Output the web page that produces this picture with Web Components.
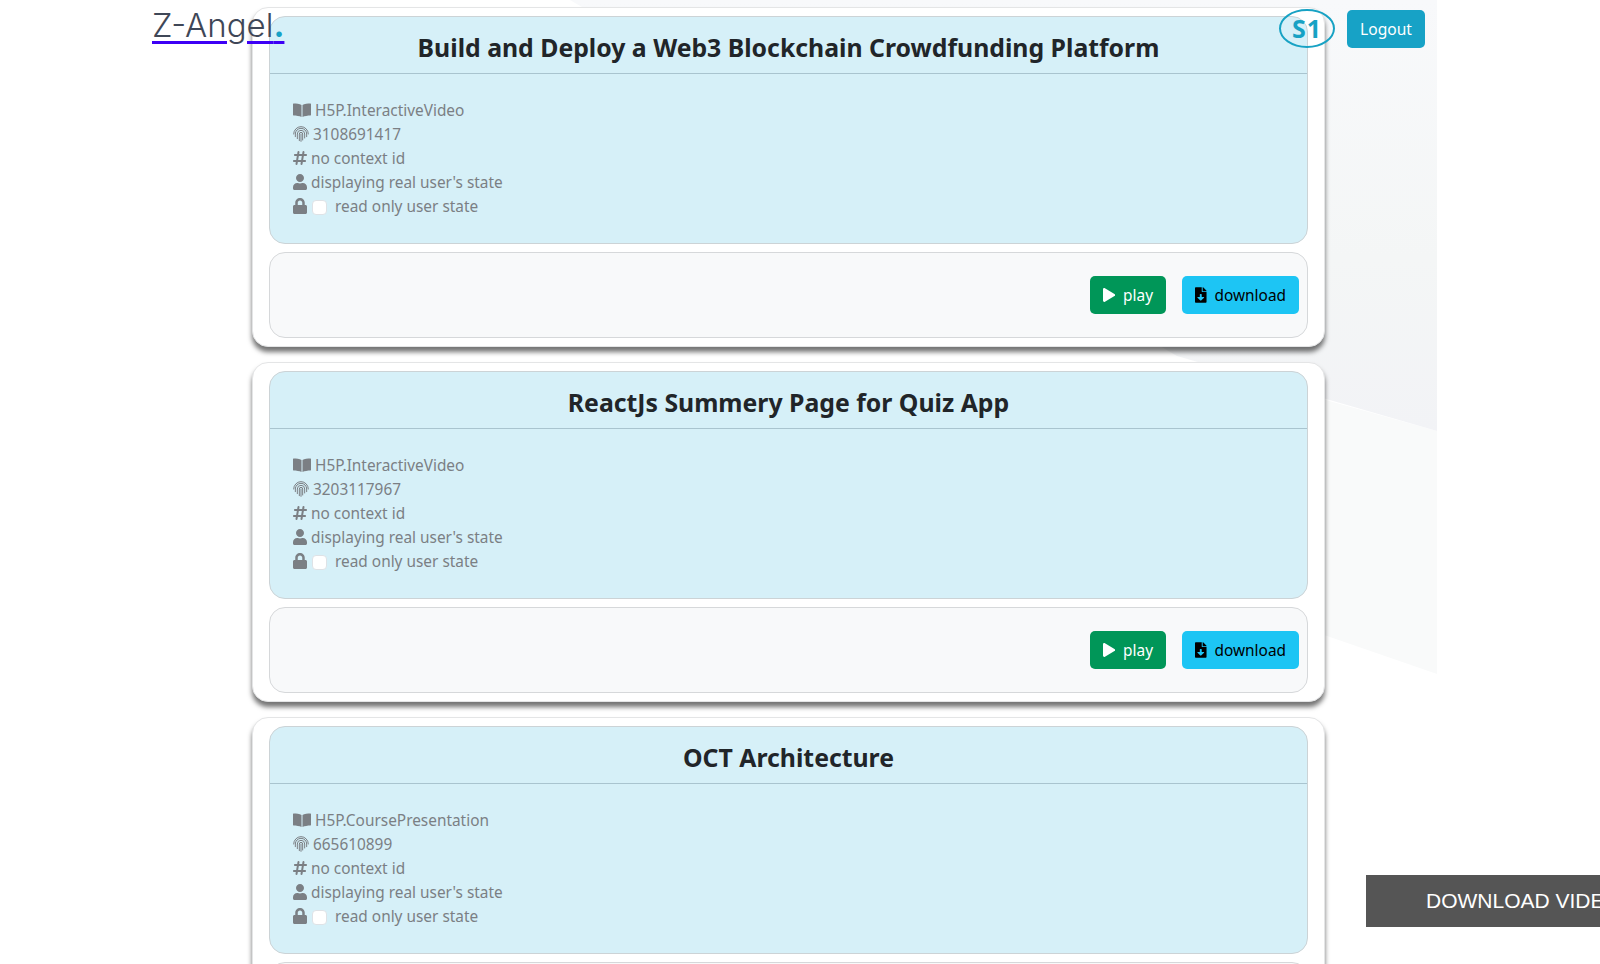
<!DOCTYPE html>
<html lang="en">
<head>
<meta charset="utf-8">
<title>Z-Angel</title>
<style>
  html, body { margin: 0; padding: 0; height: 100%; overflow: hidden; background: #fff; }
  body { font-family: "Noto Sans", "Open Sans", sans-serif; }
</style>
</head>
<body>
<z-app>
  <z-backdrop slot="backdrop"></z-backdrop>
  <z-navbar slot="nav"></z-navbar>
  <z-content-card heading="Build and Deploy a Web3 Blockchain Crowdfunding Platform" library="H5P.InteractiveVideo" content-id="3108691417"></z-content-card>
  <z-content-card heading="ReactJs Summery Page for Quiz App" library="H5P.InteractiveVideo" content-id="3203117967"></z-content-card>
  <z-content-card heading="OCT Architecture" library="H5P.CoursePresentation" content-id="665610899" no-buttons></z-content-card>
  <z-download-tab slot="overlay"></z-download-tab>
</z-app>

<script>
const ICONS = {
  book: ['0 0 576 512', 'M16 48C100 48 220 60 272 96V480C210 450 100 432 16 432 6 432 0 426 0 416V64C0 54 6 48 16 48zM560 48C476 48 356 60 304 96V480C366 450 476 432 560 432 570 432 576 426 576 416V64C576 54 570 48 560 48z'],
  hash: ['0 0 448 512', 'M181.3 32.4c17.4 2.9 29.2 19.4 26.3 36.8L197.8 128h95.1l11.5-69.3c2.9-17.4 19.4-29.2 36.8-26.3s29.2 19.4 26.3 36.8L357.8 128H416c17.7 0 32 14.3 32 32s-14.3 32-32 32H347.1L325.8 320H384c17.7 0 32 14.3 32 32s-14.3 32-32 32H315.1l-11.5 69.3c-2.9 17.4-19.4 29.2-36.8 26.3s-29.2-19.4-26.3-36.8l9.8-58.7H155.1l-11.5 69.3c-2.9 17.4-19.4 29.2-36.8 26.3s-29.2-19.4-26.3-36.8L90.2 384H32c-17.7 0-32-14.3-32-32s14.3-32 32-32H100.9l21.3-128H64c-17.7 0-32-14.3-32-32s14.3-32 32-32h68.9l11.5-69.3c2.9-17.4 19.4-29.2 36.8-26.3zM187.1 192L165.8 320h95.1l21.3-128H187.1z'],
  user: ['0 0 448 512', 'M224 256c70.7 0 128-57.3 128-128S294.7 0 224 0 96 57.3 96 128s57.3 128 128 128zm89.6 32h-16.7c-22.2 10.2-46.9 16-72.9 16s-50.6-5.8-72.9-16h-16.7C60.2 288 0 348.2 0 422.4V464c0 26.5 21.5 48 48 48h352c26.5 0 48-21.5 48-48v-41.6c0-74.2-60.2-134.4-134.4-134.4z'],
  lock: ['0 0 448 512', 'M400 224h-24v-72C376 68.2 307.8 0 224 0S72 68.2 72 152v72H48c-26.5 0-48 21.5-48 48v192c0 26.5 21.5 48 48 48h352c26.5 0 48-21.5 48-48V272c0-26.5-21.5-48-48-48zm-104 0H152v-72c0-39.7 32.3-72 72-72s72 32.3 72 72v72z'],
  play: ['0 0 448 512', 'M424.4 214.7L72.4 6.6C43.8-10.3 0 6.1 0 47.9V464c0 37.5 40.7 60.1 72.4 41.3l352-208c31.4-18.5 31.5-64.1 0-82.6z'],
  file: ['0 0 384 512', 'M224 136V0H24C10.7 0 0 10.7 0 24v464c0 13.3 10.7 24 24 24h336c13.3 0 24-10.7 24-24V160H248c-13.2 0-24-10.8-24-24zm76.45 211.36l-96.42 95.7c-6.65 6.61-17.39 6.61-24.04 0l-96.42-95.7C73.42 337.29 80.54 320 94.82 320H160v-80c0-8.84 7.16-16 16-16h32c8.84 0 16 7.16 16 16v80h65.18c14.28 0 21.4 17.29 11.27 27.36zM377 105L279.1 7c-4.5-4.5-10.6-7-17-7H256v128h128v-6.1c0-6.3-2.5-12.4-7-16.9z']
};

function icon(name) {
  const [box, d] = ICONS[name];
  const w = box.split(' ')[2] / 512;
  return `<svg viewBox="${box}" width="${w * 16}" height="16" fill="currentColor" aria-hidden="true"><path d="${d}"/></svg>`;
}

const FINGERPRINT = `<svg viewBox="0 0 24 24" width="16" height="16" fill="none" stroke="currentColor" stroke-width="1.5" stroke-linecap="round" aria-hidden="true">
  <path d="M1 12a11 11 0 0 1 22 0"/>
  <path d="M3.5 16v-4a8.5 8.5 0 0 1 17 0v4"/>
  <path d="M6.5 19v-7a5.5 5.5 0 0 1 11 0v6"/>
  <path d="M9.5 22v-10a2.5 2.5 0 0 1 5 0v9"/>
  <path d="M12 12v11"/>
</svg>`;

class ZApp extends HTMLElement {
  constructor() {
    super();
    this.attachShadow({ mode: 'open' });
    this.shadowRoot.innerHTML = `
      <style>
        :host { display: block; position: relative; height: 964px; overflow: hidden; }
        main { position: relative; display: flex; flex-direction: column; gap: 14.5px; width: 1073px; margin-left: 252px; padding-top: 6.5px; }
      </style>
      <slot name="backdrop"></slot>
      <main><slot></slot></main>
      <slot name="nav"></slot>
      <slot name="overlay"></slot>
    `;
  }
}

class ZBackdrop extends HTMLElement {
  constructor() {
    super();
    this.attachShadow({ mode: 'open' });
    this.shadowRoot.innerHTML = `
      <style>
        :host { display: block; position: absolute; inset: 0; }
        svg { display: block; }
      </style>
      <svg width="1600" height="964" viewBox="0 0 1600 964" aria-hidden="true">
        <defs>
          <linearGradient id="top" x1="0" y1="0" x2="0" y2="1">
            <stop offset="0" stop-color="#f8f9fb"/>
            <stop offset=".6" stop-color="#f4f6f6"/>
            <stop offset="1" stop-color="#f2f3f6"/>
          </linearGradient>
        </defs>
        <polygon points="1200,365 1437,431 1437,674 1240,606" fill="#f9fafa"/>
        <polygon points="570,0 1437,0 1437,431 1177,356" fill="url(#top)"/>
      </svg>
    `;
  }
}

class ZNavbar extends HTMLElement {
  constructor() {
    super();
    this.attachShadow({ mode: 'open' });
    this.shadowRoot.innerHTML = `
      <style>
        :host { display: flex; position: absolute; top: 0; left: 0; width: 1425px; height: 58px; padding-left: 152px; box-sizing: border-box; align-items: flex-start; justify-content: space-between; }
        .logo { font: 300 33px/1 "Inter", "Lato", sans-serif; color: #3f4757; text-decoration: underline; text-decoration-color: #3d00f5; text-decoration-thickness: 2.5px; text-underline-offset: 4px; margin-top: 9px; }
        .logo span { color: #17a2c6; font-weight: 700; }
        .right { display: flex; align-items: flex-start; gap: 12px; padding-top: 9px; }
        .avatar { width: 56px; height: 39px; box-sizing: border-box; border: 2px solid #17a2c4; border-radius: 50%; color: #17a2c4; font: 700 25px/35px "Noto Sans", sans-serif; letter-spacing: 1px; text-align: center; }
        button { margin-top: 1px; width: 78px; height: 38px; border: 0; border-radius: 5px; background: #17a2c6; color: #fff; font: 15.6px "Noto Sans", sans-serif; padding: 0; }
      </style>
      <a class="logo">Z-Angel<span>.</span></a>
      <div class="right">
        <div class="avatar">S1</div>
        <button>Logout</button>
      </div>
    `;
  }
}

class ZInfoRow extends HTMLElement {
  constructor() {
    super();
    this.attachShadow({ mode: 'open' });
    this.shadowRoot.innerHTML = `
      <style>
        :host { display: flex; align-items: center; gap: 4px; height: 24px; color: #7b7f84; font-size: 15.4px; }
        ::slotted(span[slot="icon"]) { display: flex; flex: none; }
      </style>
      <slot name="icon"></slot><slot></slot>
    `;
  }
}

class ZContentCard extends HTMLElement {
  constructor() {
    super();
    this.attachShadow({ mode: 'open' });
  }

  connectedCallback() {
    this.render();
  }

  render() {
    const heading = this.getAttribute('heading');
    const library = this.getAttribute('library');
    const contentId = this.getAttribute('content-id');
    const buttons = this.hasAttribute('no-buttons') ? '' : `
        <div class="btn play">${icon('play')}play</div>
        <div class="btn download">${icon('file')}download</div>`;
    this.shadowRoot.innerHTML = `
      <style>
        :host { display: block; flex: none; box-sizing: border-box; height: 340.5px; padding: 8px 16px; background: #fff; border: 1px solid #e4e5e6; border-radius: 16px; box-shadow: 0 5px 5px rgba(0,0,0,.55); }
        .panel { box-sizing: border-box; height: 228.5px; border: 1px solid #ccd3d6; border-radius: 16px; background: #d6f0f8; }
        h3 { margin: 0; height: 57.5px; box-sizing: border-box; padding-top: 5.5px; border-bottom: 1px solid #a9c4cf; color: #212529; font: 700 24.8px/50px "Noto Sans", sans-serif; text-align: center; }
        .info { padding: 24px 23px; }
        .check { width: 15px; height: 15px; box-sizing: border-box; background: #fff; border: 1px solid #dee2e6; border-radius: 4px; flex: none; margin: 3px 4px 0 1px; }
        .actions { box-sizing: border-box; display: flex; justify-content: flex-end; align-items: center; gap: 16px; margin-top: 8px; height: 86px; padding-right: 8px; border: 1px solid #d6d8da; border-radius: 16px; background: #f8f9fa; }
        .btn { display: flex; align-items: center; gap: 8px; height: 38px; box-sizing: border-box; padding: 0 13px; border-radius: 5px; font-size: 15.4px; }
        .play { width: 76px; background: #009658; color: #fff; }
        .download { width: 117px; background: #1dc5f4; color: #000; }
      </style>
      <div class="panel">
        <h3>${heading}</h3>
        <div class="info">
          <z-info-row><span slot="icon">${icon('book')}</span>${library}</z-info-row>
          <z-info-row><span slot="icon">${FINGERPRINT}</span>${contentId}</z-info-row>
          <z-info-row><span slot="icon">${icon('hash')}</span>no context id</z-info-row>
          <z-info-row><span slot="icon">${icon('user')}</span>displaying real user's state</z-info-row>
          <z-info-row><span slot="icon">${icon('lock')}</span><span class="check"></span>read only user state</z-info-row>
        </div>
      </div>
      <div class="actions">${buttons}
      </div>
    `;
  }
}

class ZDownloadTab extends HTMLElement {
  constructor() {
    super();
    this.attachShadow({ mode: 'open' });
    this.shadowRoot.innerHTML = `
      <style>
        :host { display: block; position: absolute; top: 875px; left: 1366px; width: 300px; height: 52px; box-sizing: border-box; padding-left: 60px; background: #555; color: #fff; font: 21px/52px "Liberation Sans", Arial, sans-serif; white-space: nowrap; }
      </style>
      DOWNLOAD VIDEO
    `;
  }
}

customElements.define('z-app', ZApp);
customElements.define('z-backdrop', ZBackdrop);
customElements.define('z-navbar', ZNavbar);
customElements.define('z-info-row', ZInfoRow);
customElements.define('z-content-card', ZContentCard);
customElements.define('z-download-tab', ZDownloadTab);
</script>
</body>
</html>
